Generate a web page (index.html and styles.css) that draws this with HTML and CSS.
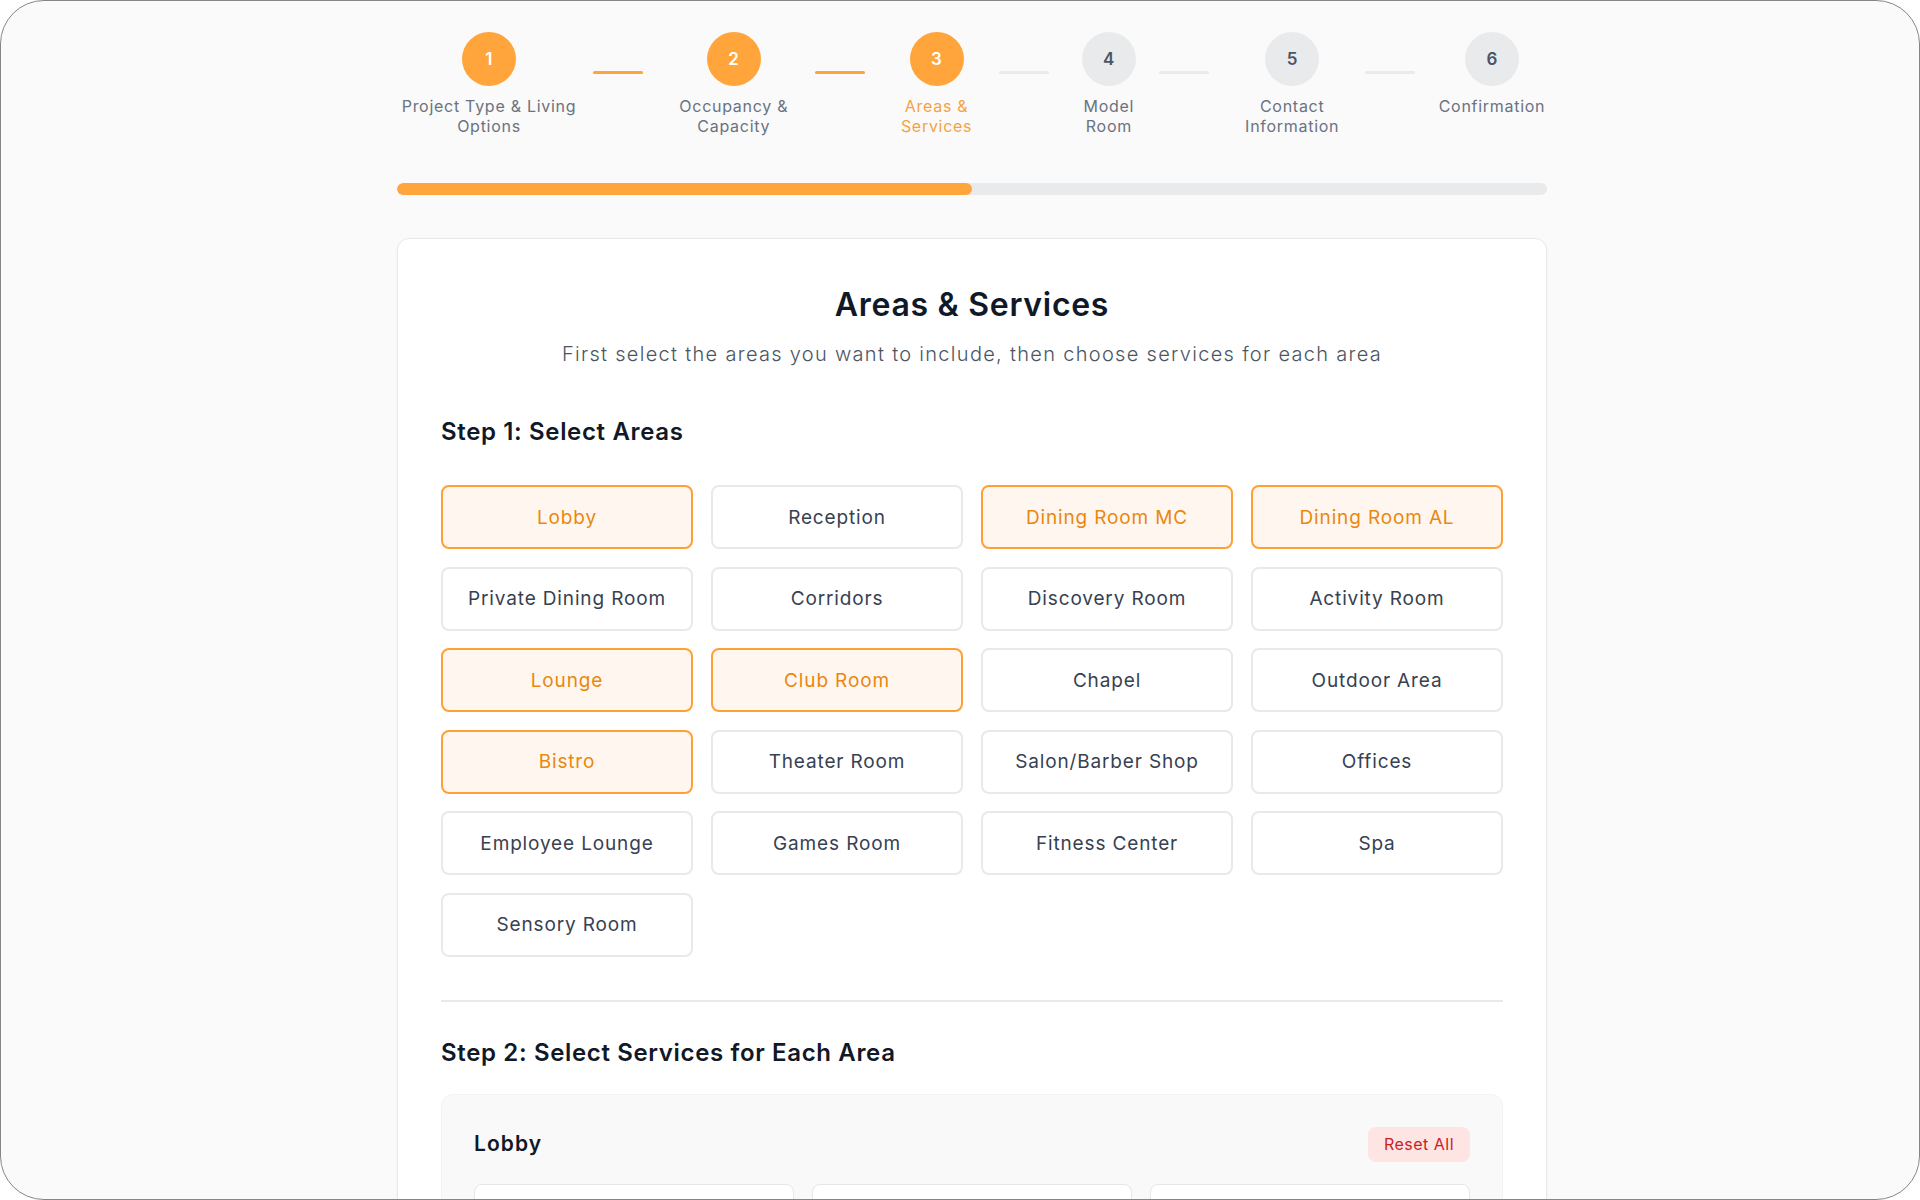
FILE: index.html
```html
<!DOCTYPE html>
<html lang="en">
<head>
<meta charset="utf-8">
<title>Areas &amp; Services</title>
<link rel="stylesheet" href="styles.css">
</head>
<body>
<div class="frame">
  <div class="page">
    <nav class="stepper">
      <div class="group">
        <div class="step s1 done"><div class="circle">1</div><div class="label">Project Type &amp; Living Options</div></div>
        <div class="conn done"></div>
      </div>
      <div class="group">
        <div class="step s2 done"><div class="circle">2</div><div class="label">Occupancy &amp; Capacity</div></div>
        <div class="conn done"></div>
      </div>
      <div class="group">
        <div class="step s3 current"><div class="circle">3</div><div class="label">Areas &amp; Services</div></div>
        <div class="conn"></div>
      </div>
      <div class="group">
        <div class="step s4"><div class="circle">4</div><div class="label">Model Room</div></div>
        <div class="conn"></div>
      </div>
      <div class="group">
        <div class="step s5"><div class="circle">5</div><div class="label">Contact Information</div></div>
        <div class="conn"></div>
      </div>
      <div class="group">
        <div class="step s6"><div class="circle">6</div><div class="label">Confirmation</div></div>
      </div>
    </nav>

    <div class="progress"><div class="progress-fill" style="width:50%"></div></div>

    <section class="card">
      <h1 class="title">Areas &amp; Services</h1>
      <p class="subtitle">First select the areas you want to include, then choose services for each area</p>

      <h2 class="section-title first">Step 1: Select Areas</h2>
      <div class="areas">
        <button class="area selected">Lobby</button>
        <button class="area">Reception</button>
        <button class="area selected">Dining Room MC</button>
        <button class="area selected">Dining Room AL</button>
        <button class="area">Private Dining Room</button>
        <button class="area">Corridors</button>
        <button class="area">Discovery Room</button>
        <button class="area">Activity Room</button>
        <button class="area selected">Lounge</button>
        <button class="area selected">Club Room</button>
        <button class="area">Chapel</button>
        <button class="area">Outdoor Area</button>
        <button class="area selected">Bistro</button>
        <button class="area">Theater Room</button>
        <button class="area">Salon/Barber Shop</button>
        <button class="area">Offices</button>
        <button class="area">Employee Lounge</button>
        <button class="area">Games Room</button>
        <button class="area">Fitness Center</button>
        <button class="area">Spa</button>
        <button class="area">Sensory Room</button>
      </div>

      <hr class="divider">

      <h2 class="section-title second">Step 2: Select Services for Each Area</h2>
      <div class="panel">
        <div class="panel-head">
          <h3 class="panel-title">Lobby</h3>
          <button class="reset">Reset All</button>
        </div>
        <div class="services">
          <div class="service"></div>
          <div class="service"></div>
          <div class="service"></div>
        </div>
      </div>
    </section>
  </div>
</div>
</body>
</html>
```
FILE: styles.css
```css
* { box-sizing: border-box; }
html, body { margin: 0; padding: 0; background: #ffffff; }
body {
  font-family: Inter, "Noto Sans", "Liberation Sans", sans-serif;
  letter-spacing: 0.02em;
  color: #111827;
}
.frame {
  width: 1920px;
  height: 1200px;
  border: 1px solid #858585;
  border-radius: 44px;
  background: #fafafa;
  overflow: hidden;
}
.page {
  width: 1150px;
  margin-left: calc(50% - 563px);
  padding-top: 31px;
}

/* stepper */
.stepper {
  display: flex;
  justify-content: space-between;
  align-items: flex-start;
}
.group { display: flex; align-items: flex-start; }
.step {
  display: flex;
  flex-direction: column;
  align-items: center;
  text-align: center;
}
.s1 { width: 184px; }
.s2 { width: 138px; }
.s3 { width: 100px; }
.s4 { width: 77px; }
.s5 { width: 122px; }
.s6 { width: 110px; }
.circle {
  width: 54px;
  height: 54px;
  border-radius: 50%;
  background: #e9eaec;
  color: #4b5563;
  display: flex;
  align-items: center;
  justify-content: center;
  font-size: 17px;
  font-weight: 600;
}
.step.done .circle, .step.current .circle { background: #ffa53b; color: #ffffff; }
.label {
  margin-top: 10px;
  font-size: 16px;
  line-height: 20px;
  letter-spacing: 0.045em;
  color: #6b7280;
}
.step.current .label { color: #f7a23f; }
.conn {
  width: 50px;
  height: 3px;
  margin: 39px 12px 0;
  background: #e9eaec;
  border-radius: 2px;
}
.conn.done { background: #ffa53b; }

.progress {
  margin-top: 47px;
  height: 12px;
  border-radius: 6px;
  background: #e9eaec;
  overflow: hidden;
}
.progress-fill { height: 100%; background: #ffa53b; border-radius: 6px; }

/* card */
.card {
  margin-top: 43px;
  background: #ffffff;
  border: 1px solid #e8e8e8;
  border-radius: 12px;
  box-shadow: 0 1px 3px rgba(0, 0, 0, 0.04);
  padding: 46px 43px 60px;
}
.title {
  margin: 0;
  text-align: center;
  font-size: 32px;
  line-height: 40px;
  font-weight: 600;
  color: #111827;
  letter-spacing: 0.022em;
}
.subtitle {
  margin: 15px 0 0;
  text-align: center;
  font-size: 20px;
  line-height: 28px;
  font-weight: 300;
  letter-spacing: 0.065em;
  color: #4b5563;
}
.section-title {
  margin: 0;
  font-size: 24px;
  line-height: 32px;
  font-weight: 600;
  color: #111827;
  letter-spacing: 0.027em;
}
.section-title.first { margin-top: 48px; margin-bottom: 37px; }
.section-title.second { margin-top: 35px; margin-bottom: 25px; }

.areas {
  display: grid;
  grid-template-columns: repeat(4, 1fr);
  gap: 17.6px 18px;
}
.area {
  height: 64px;
  border: 2px solid #e8e9eb;
  border-radius: 8px;
  background: #ffffff;
  font-family: inherit;
  letter-spacing: 0.045em;
  font-size: 19px;
  font-weight: 400;
  color: #374151;
  padding: 0 12px;
}
.area.selected {
  border-color: #ffa035;
  background: #fff7ef;
  color: #ea870e;
}

.divider {
  margin: 43px 0 0;
  border: 0;
  height: 2px;
  background: #e8e9eb;
}

.panel {
  background: #f9f9f9;
  border: 1px solid #f3f3f3;
  border-radius: 12px;
  padding: 32px 32px 40px;
}
.panel-head {
  display: flex;
  align-items: center;
  justify-content: space-between;
}
.panel-title {
  margin: 0;
  font-size: 21px;
  line-height: 28px;
  font-weight: 600;
  letter-spacing: 0.05em;
  color: #111827;
}
.reset {
  border: 0;
  background: #ffe4e4;
  color: #c81e1e;
  font-family: inherit;
  letter-spacing: 0.03em;
  font-size: 16px;
  font-weight: 400;
  line-height: 23px;
  padding: 6px 14px;
  border-radius: 8px;
  width: 102px;
}
.services {
  margin-top: 22px;
  display: grid;
  grid-template-columns: repeat(3, 1fr);
  gap: 18px;
}
.service {
  height: 120px;
  background: #ffffff;
  border: 1px solid #e5e7eb;
  border-radius: 8px;
}
```
